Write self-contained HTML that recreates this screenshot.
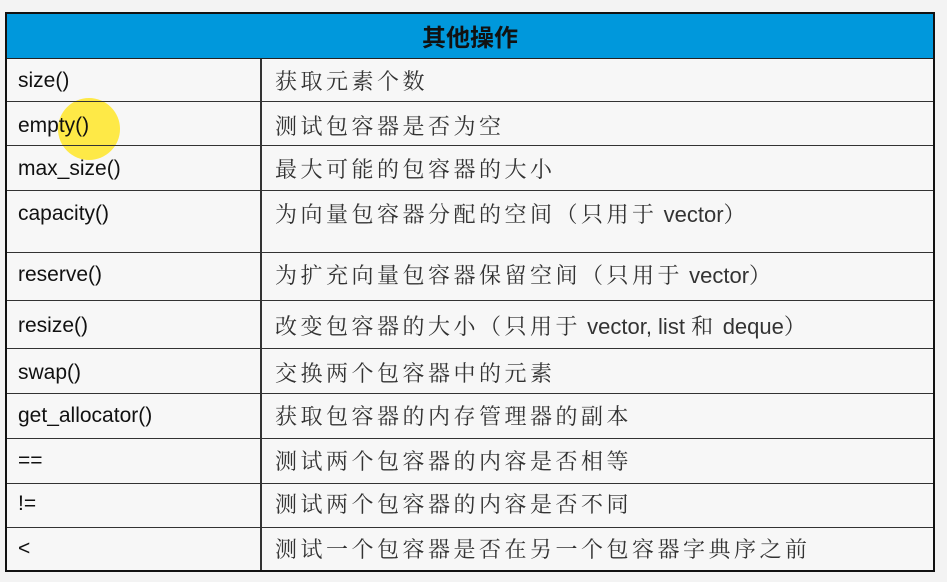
<!DOCTYPE html>
<html><head><meta charset="utf-8"><style>
body{margin:0;width:947px;height:582px;background:#f3f3f3;position:relative;overflow:hidden}
#t{position:absolute;left:5px;top:12px;width:926px;height:556px;border:2px solid #111;background:#f7f7f7}
#h{position:absolute;left:0;top:0;width:926px;height:44px;background:#0098dc;border-bottom:1px solid #222;font:bold 24px "Noto Sans CJK SC",sans-serif;color:#111;text-align:center;line-height:44px}
.r{position:absolute;left:0;width:926px;border-top:1.5px solid #333}
.a{position:absolute;left:11px;font:21px "Liberation Sans",sans-serif;color:#111}
.b{position:absolute;left:268px;font:22px "Liberation Sans","Noto Serif CJK SC",serif;color:#333;letter-spacing:3.5px;white-space:nowrap}
.b span{letter-spacing:0}
#v{position:absolute;left:253px;top:45px;width:1.5px;height:511px;background:#333}
#c{position:absolute;left:51px;top:84px;width:62px;height:62px;border-radius:50%;background:rgba(255,230,40,.85)}
</style></head><body>
<div id="t">
<div id="h">其他操作</div>
<div id="c"></div>
<div id="v"></div>
</div>
<div style="position:absolute;left:7px;top:14px;width:926px">
<div class="r" style="top:87px"></div>
<div class="r" style="top:131px"></div>
<div class="r" style="top:176px"></div>
<div class="r" style="top:238px"></div>
<div class="r" style="top:286px"></div>
<div class="r" style="top:334px"></div>
<div class="r" style="top:379px"></div>
<div class="r" style="top:424px"></div>
<div class="r" style="top:469px"></div>
<div class="r" style="top:513px"></div>
<div class="a" style="top:55px">size()</div><div class="b" style="top:51px">获取元素个数</div>
<div class="a" style="top:100px">empty()</div><div class="b" style="top:96px">测试包容器是否为空</div>
<div class="a" style="top:143px">max_size()</div><div class="b" style="top:139px">最大可能的包容器的大小</div>
<div class="a" style="top:188px">capacity()</div><div class="b" style="top:184px">为向量包容器分配的空间（只用于<span> vector</span>）</div>
<div class="a" style="top:249px">reserve()</div><div class="b" style="top:245px">为扩充向量包容器保留空间（只用于<span> vector</span>）</div>
<div class="a" style="top:300px">resize()</div><div class="b" style="top:296px">改变包容器的大小（只用于<span> vector, list </span>和<span> deque</span>）</div>
<div class="a" style="top:347px">swap()</div><div class="b" style="top:343px">交换两个包容器中的元素</div>
<div class="a" style="top:390px">get_allocator()</div><div class="b" style="top:386px">获取包容器的内存管理器的副本</div>
<div class="a" style="top:435px">==</div><div class="b" style="top:431px">测试两个包容器的内容是否相等</div>
<div class="a" style="top:478px">!=</div><div class="b" style="top:474px">测试两个包容器的内容是否不同</div>
<div class="a" style="top:523px">&lt;</div><div class="b" style="top:519px">测试一个包容器是否在另一个包容器字典序之前</div>
</div>
</body></html>
